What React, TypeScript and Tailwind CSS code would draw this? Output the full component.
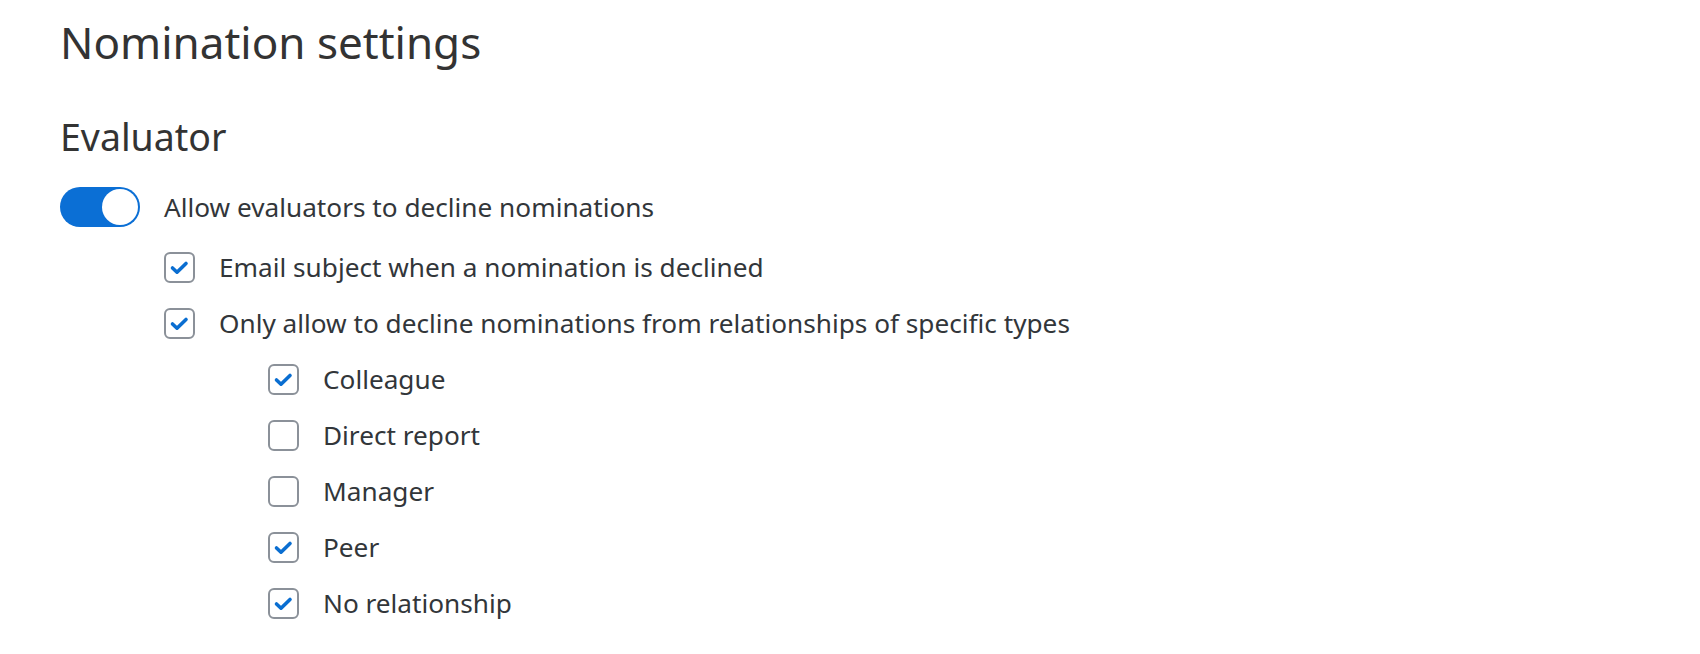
import React from "react";

type Item = { label: string; checked: boolean };

const LEVEL_ONE: Item[] = [
  { label: "Email subject when a nomination is declined", checked: true },
  { label: "Only allow to decline nominations from relationships of specific types", checked: true },
];

const RELATIONSHIPS: Item[] = [
  { label: "Colleague", checked: true },
  { label: "Direct report", checked: false },
  { label: "Manager", checked: false },
  { label: "Peer", checked: true },
  { label: "No relationship", checked: true },
];

function Checkbox({ checked }: { checked: boolean }) {
  return (
    <span className="flex h-[31px] w-[31px] shrink-0 items-center justify-center rounded-[6px] border-2 border-[#8b9199] bg-white">
      {checked && (
        <svg viewBox="0 0 27 27" className="h-[27px] w-[27px]" fill="none">
          <path
            d="M6.5 14 L11 18.2 L20 9.5"
            stroke="#0a6ed1"
            strokeWidth="3.6"
            strokeLinecap="round"
            strokeLinejoin="round"
          />
        </svg>
      )}
    </span>
  );
}

function Row({ item }: { item: Item }) {
  return (
    <label className="flex h-[56px] items-center gap-[24px]">
      <Checkbox checked={item.checked} />
      <span className="text-[26.2px] leading-none text-[#32363a]">{item.label}</span>
    </label>
  );
}

export default function App() {
  return (
    <div
      className="min-h-screen bg-white pl-[60px] pt-[15px] text-[#32363a]"
      style={{ fontFamily: '"Noto Sans", "Open Sans", sans-serif' }}
    >
      <h1 className="text-[44px] leading-[55px] font-normal text-[#333333]">Nomination settings</h1>

      <h2 className="mt-[43px] text-[37.5px] leading-[48px] font-normal text-[#333333]">Evaluator</h2>

      {/* Toggle */}
      <div className="mt-[26px] flex items-center gap-[24px]">
        <span className="flex h-[40px] w-[80px] shrink-0 items-center justify-end rounded-full bg-[#0b6fd5] p-[2px]">
          <span className="h-[36px] w-[36px] rounded-full bg-white" />
        </span>
        <span className="text-[26.2px] leading-none">Allow evaluators to decline nominations</span>
      </div>

      <div className="mt-[12px] pl-[104px]">
        {LEVEL_ONE.map((item) => (
          <Row key={item.label} item={item} />
        ))}
        <div className="pl-[104px]">
          {RELATIONSHIPS.map((item) => (
            <Row key={item.label} item={item} />
          ))}
        </div>
      </div>
    </div>
  );
}
